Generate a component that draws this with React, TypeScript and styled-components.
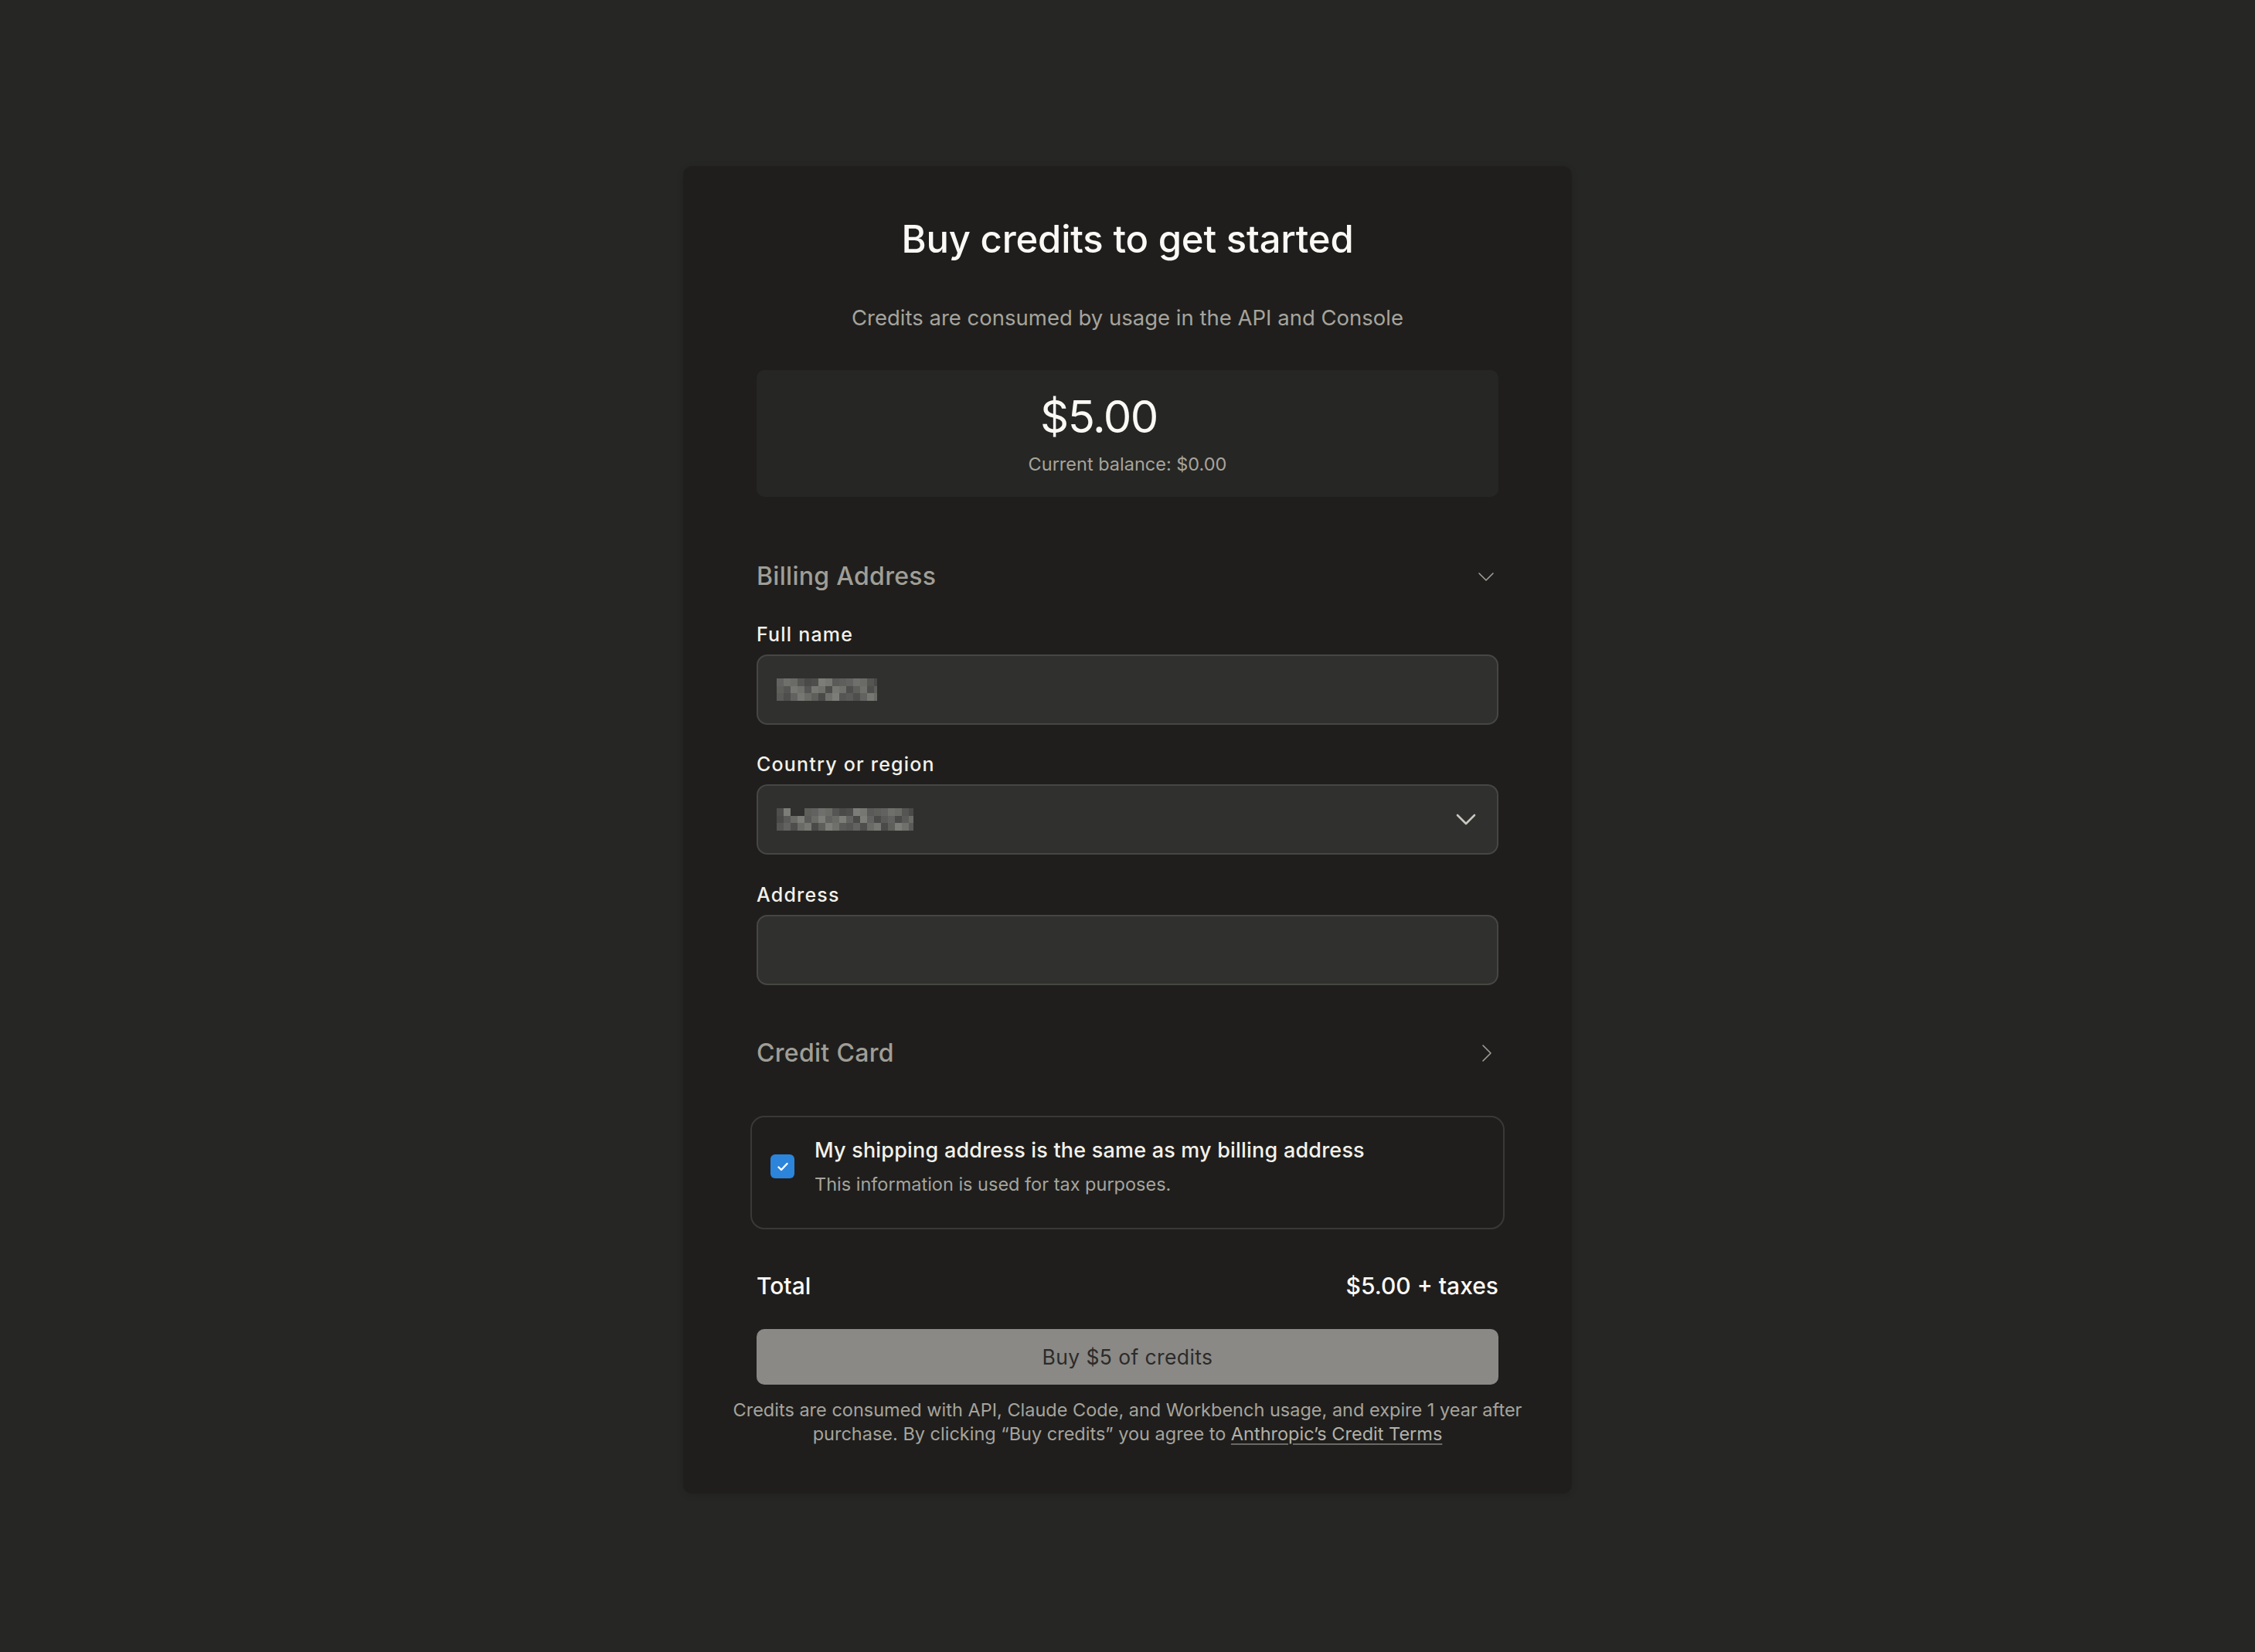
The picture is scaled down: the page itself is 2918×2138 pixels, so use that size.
import React from 'react';
import styled, { createGlobalStyle } from 'styled-components';

const GlobalStyle = createGlobalStyle`
  html, body {
    margin: 0;
    padding: 0;
    background: #262624;
  }
  body {
    font-family: Inter, "Noto Sans", "Liberation Sans", sans-serif;
    color: #faf9f5;
    -webkit-font-smoothing: antialiased;
  }
  * {
    box-sizing: border-box;
  }
`;

const Page = styled.div`
  min-height: 100vh;
  display: flex;
  justify-content: center;
  align-items: flex-start;
  padding-top: 215px;
`;

const Card = styled.div`
  width: 1150px;
  background: #1f1e1d;
  border-radius: 12px;
  padding: 67px 95px 62px;
  box-shadow: 0 2px 10px rgba(0, 0, 0, 0.12);
  display: flex;
  flex-direction: column;
`;

const Title = styled.h1`
  margin: 0;
  font-size: 49px;
  line-height: 56px;
  font-weight: 500;
  text-align: center;
  color: #faf9f5;
  letter-spacing: -0.2px;
`;

const Subtitle = styled.p`
  margin: 56px 0 0;
  font-size: 27.5px;
  line-height: 34px;
  text-align: center;
  color: #a6a49c;
`;

const AmountBox = styled.div`
  margin-top: 51px;
  height: 164px;
  background: #262624;
  border-radius: 10px;
  padding: 26px 0 28px;
  display: flex;
  flex-direction: column;
  align-items: center;
`;

const Amount = styled.div`
  font-size: 58px;
  line-height: 68px;
  font-weight: 400;
  letter-spacing: -1.5px;
  color: #faf9f5;
  margin-right: 74px;
`;

const Balance = styled.div`
  margin-top: 14px;
  font-size: 23.5px;
  line-height: 28px;
  color: #a6a49c;
`;

const SectionHeader = styled.div<{ $gap: number }>`
  margin-top: ${(p) => p.$gap}px;
  display: flex;
  align-items: center;
  justify-content: space-between;
  height: 40px;
`;

const SectionTitle = styled.h2`
  margin: 0;
  font-size: 32px;
  line-height: 40px;
  font-weight: 500;
  letter-spacing: 0.3px;
  color: #a09e96;
`;

const HeaderIcon = styled.span`
  display: flex;
  width: 24px;
  height: 24px;
  margin-right: 4px;
  color: #a09e96;
`;

const Label = styled.label<{ $gap: number }>`
  display: block;
  margin-top: ${(p) => p.$gap}px;
  font-size: 25px;
  line-height: 30px;
  font-weight: 500;
  letter-spacing: 1.2px;
  color: #f3f1ea;
`;

const Field = styled.div`
  margin-top: 11px;
  height: 91px;
  background: #30302e;
  border: 2px solid #464643;
  border-radius: 14px;
  padding: 0 26px 0 24px;
  display: flex;
  align-items: center;
  justify-content: space-between;
`;

const SelectIcon = styled.span`
  display: flex;
  width: 28px;
  height: 28px;
  color: #c9c7bf;
`;

const ConsentBox = styled.div`
  margin: 61px -8px 0;
  height: 147px;
  border: 2px solid #3a3937;
  border-radius: 18px;
  padding: 27px 24px 0;
  display: flex;
  align-items: flex-start;
  gap: 26px;
`;

const Checkbox = styled.span`
  flex: none;
  width: 31px;
  height: 31px;
  margin-top: 21px;
  border-radius: 6px;
  background: #2c84db;
  display: flex;
  align-items: center;
  justify-content: center;
  color: #ffffff;
`;

const ConsentText = styled.div`
  display: flex;
  flex-direction: column;
  gap: 14px;
`;

const ConsentTitle = styled.div`
  font-size: 27px;
  line-height: 32px;
  font-weight: 500;
  letter-spacing: 0.2px;
  color: #f3f1ea;
`;

const ConsentNote = styled.div`
  font-size: 23.5px;
  line-height: 28px;
  color: #a6a49c;
`;

const TotalRow = styled.div`
  margin-top: 54px;
  display: flex;
  justify-content: space-between;
  font-size: 30px;
  line-height: 38px;
  font-weight: 500;
  color: #faf9f5;
`;

const BuyButton = styled.button`
  margin-top: 37px;
  height: 72px;
  width: 100%;
  border: none;
  border-radius: 10px;
  background: #8a8986;
  color: #2c2b29;
  font-family: inherit;
  font-size: 26.5px;
  font-weight: 400;
  letter-spacing: 0.4px;
  cursor: not-allowed;
`;

const Footnote = styled.p`
  margin: 17px -44px 0;
  font-size: 23.5px;
  line-height: 31px;
  text-align: center;
  color: #a6a49c;
`;

const TermsLink = styled.a`
  color: #b4b2a9;
  text-decoration: underline;
  text-decoration-color: #6a6965;
  text-underline-offset: 4px;
  text-decoration-thickness: 1.5px;
`;

// pixelated placeholder for redacted values
const mosaicGreys = ['#4e4e4c', '#5a5a58', '#6f6f6c', '#4a4a48', '#767672', '#626260', '#555553', '#7c7c78', '#5e5e5b', '#6a6a67'];

const Mosaic: React.FC<{ width: number; seed: number; dip?: number[] }> = ({ width, seed, dip = [] }) => {
  const cell = 9;
  const cols = Math.ceil(width / cell);
  const rects: React.ReactNode[] = [];
  for (let r = 0; r < 3; r++) {
    for (let c = 0; c < cols; c++) {
      if (r === 0 && dip.includes(c)) continue;
      const g = mosaicGreys[(c * 7 + r * 3 + seed * 5 + ((c * r) % 4)) % mosaicGreys.length];
      rects.push(<rect key={`${r}-${c}`} x={c * cell} y={r * 9.5} width={cell} height={9.5} fill={g} />);
    }
  }
  return (
    <svg width={width} height={28.5} viewBox={`0 0 ${width} 28.5`} shapeRendering="crispEdges">
      {rects}
    </svg>
  );
};

const ChevronDown = () => (
  <svg width="24" height="24" viewBox="0 0 24 24" fill="none" stroke="currentColor" strokeWidth="1.6" strokeLinecap="round" strokeLinejoin="round">
    <path d="M3 8l9 9 9-9" />
  </svg>
);

const ChevronRight = () => (
  <svg width="24" height="24" viewBox="0 0 24 24" fill="none" stroke="currentColor" strokeWidth="1.6" strokeLinecap="round" strokeLinejoin="round">
    <path d="M8 2l10 10-10 10" />
  </svg>
);

const SelectChevron = () => (
  <svg width="28" height="28" viewBox="0 0 28 28" fill="none" stroke="currentColor" strokeWidth="2.6" strokeLinecap="round" strokeLinejoin="round">
    <path d="M3 8l11 11 11-11" />
  </svg>
);

const Check = () => (
  <svg width="20" height="20" viewBox="0 0 20 20" fill="none" stroke="currentColor" strokeWidth="2.4" strokeLinecap="round" strokeLinejoin="round">
    <path d="M4.5 10.5l3.5 3.5 7.5-8" />
  </svg>
);

const App: React.FC = () => {
  return (
    <>
      <GlobalStyle />
      <Page>
        <Card>
          <Title>Buy credits to get started</Title>
          <Subtitle>Credits are consumed by usage in the API and Console</Subtitle>

          <AmountBox>
            <Amount>$5.00</Amount>
            <Balance>Current balance: $0.00</Balance>
          </AmountBox>

          <SectionHeader $gap={83}>
            <SectionTitle>Billing Address</SectionTitle>
            <HeaderIcon>
              <ChevronDown />
            </HeaderIcon>
          </SectionHeader>

          <Label $gap={40}>Full name</Label>
          <Field>
            <Mosaic width={130} seed={1} />
          </Field>

          <Label $gap={36}>Country or region</Label>
          <Field>
            <Mosaic width={177} seed={4} dip={[2, 3]} />
            <SelectIcon>
              <SelectChevron />
            </SelectIcon>
          </Field>

          <Label $gap={37}>Address</Label>
          <Field />

          <SectionHeader $gap={68}>
            <SectionTitle>Credit Card</SectionTitle>
            <HeaderIcon>
              <ChevronRight />
            </HeaderIcon>
          </SectionHeader>

          <ConsentBox>
            <Checkbox>
              <Check />
            </Checkbox>
            <ConsentText>
              <ConsentTitle>My shipping address is the same as my billing address</ConsentTitle>
              <ConsentNote>This information is used for tax purposes.</ConsentNote>
            </ConsentText>
          </ConsentBox>

          <TotalRow>
            <span>Total</span>
            <span>$5.00 + taxes</span>
          </TotalRow>

          <BuyButton disabled>Buy $5 of credits</BuyButton>

          <Footnote>
            Credits are consumed with API, Claude Code, and Workbench usage, and expire 1 year after purchase. By
            clicking “Buy credits” you agree to <TermsLink href="#">Anthropic’s Credit Terms</TermsLink>
          </Footnote>
        </Card>
      </Page>
    </>
  );
};

export default App;
